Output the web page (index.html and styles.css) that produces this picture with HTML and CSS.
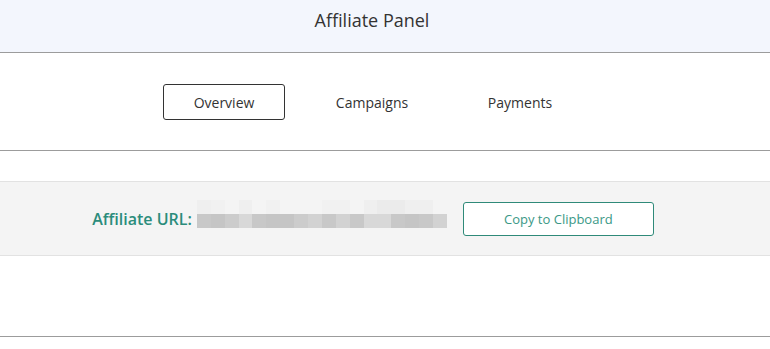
FILE: index.html
```html
<!DOCTYPE html>
<html lang="en">
<head>
    <meta charset="UTF-8">
    <meta name="viewport" content="width=device-width, initial-scale=1.0">
    <title>Affiliate Panel</title>
    <link rel="stylesheet" href="styles.css">
</head>
<body>
    <div class="header">
        <h3>Affiliate Panel</h3>
    </div>

    <div class="tabs">
        <a class="tab active" href="#">Overview</a>
        <a class="tab" href="#">Campaigns</a>
        <a class="tab" href="#">Payments</a>
    </div>

    <div class="url-bar">
        <span class="url-label">Affiliate URL:</span>
        <div class="url-blur">
            <span class="s1"></span><span class="s2"></span><span class="s0"></span><span class="s1"></span><span class="s0"></span><span class="s2"></span><span class="s0"></span><span class="s0"></span><span class="s0"></span><span class="s2"></span><span class="s2"></span><span class="s0"></span><span class="s1"></span><span class="s3"></span><span class="s3"></span><span class="s1"></span><span class="s1"></span><span class="s0"></span>
            <span class="d2"></span><span class="d3"></span><span class="d1"></span><span class="d5"></span><span class="d2"></span><span class="d3"></span><span class="d3"></span><span class="d1"></span><span class="d4"></span><span class="d2"></span><span class="d4"></span><span class="d2"></span><span class="d5"></span><span class="d5"></span><span class="d2"></span><span class="d3"></span><span class="d2"></span><span class="d4"></span>
        </div>
        <button class="copy-btn" type="button">Copy to Clipboard</button>
    </div>

    <div class="content"></div>
</body>
</html>
```

FILE: styles.css
```css
body {
    margin: 0;
    background-color: white;
    font-family: "Open Sans", "Liberation Sans", sans-serif;
    color: #333;
}

.header {
    height: 53px;
    box-sizing: border-box;
    padding: 8px 26px 0 0;
    background-color: #f3f6fd;
    border-bottom: 1px solid #9c9c9c;
    text-align: center;
}

.header h3 {
    margin: 0;
    font-size: 18px;
    font-weight: normal;
    line-height: 24px;
}

.tabs {
    display: flex;
    justify-content: center;
    gap: 26px;
    padding: 31px 26px 30px 0;
    border-bottom: 1px solid #9c9c9c;
}

.tab {
    width: 122px;
    height: 36px;
    box-sizing: border-box;
    display: flex;
    align-items: center;
    justify-content: center;
    border: 1px solid transparent;
    border-radius: 3px;
    font-size: 14px;
    color: #333;
    text-decoration: none;
}

.tab.active {
    border-color: #333;
}

.url-bar {
    display: flex;
    align-items: center;
    justify-content: center;
    height: 75px;
    box-sizing: border-box;
    margin-top: 30px;
    padding: 0 24px 0 0;
    background-color: #f4f4f4;
    border-top: 1px solid #e2e2e2;
    border-bottom: 1px solid #e2e2e2;
}

.url-label {
    font-size: 16px;
    font-weight: 600;
    color: #2b8c7b;
}

.url-blur {
    display: grid;
    width: 250px;
    grid-template-columns: repeat(18, 1fr);
    grid-auto-rows: 14px;
    margin: 0 16px 10px 5px;
}

.s0 { background: #f4f4f4; }
.s1 { background: #efefef; }
.s2 { background: #f1f1f1; }
.s3 { background: #ebebeb; }
.d1 { background: #cccccc; }
.d2 { background: #c8c8c8; }
.d3 { background: #c5c5c5; }
.d4 { background: #d2d2d2; }
.d5 { background: #d8d8d8; }

.copy-btn {
    width: 191px;
    height: 34px;
    background: white;
    border: 1px solid #2f8a79;
    border-radius: 3px;
    font-family: "Open Sans", "Liberation Sans", sans-serif;
    font-size: 13px;
    color: #3a9886;
    cursor: pointer;
}

.content {
    height: 81px;
    box-sizing: border-box;
    border-bottom: 1px solid #9c9c9c;
}
```
